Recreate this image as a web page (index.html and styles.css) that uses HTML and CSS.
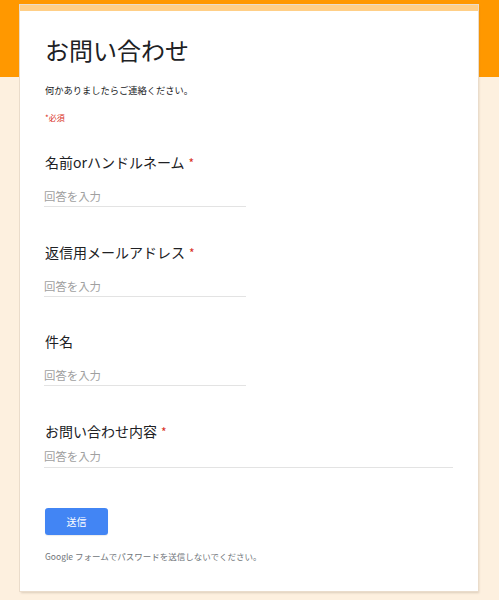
FILE: index.html
```html
<!DOCTYPE html>
<html lang="ja">
<head>
<meta charset="utf-8">
<title>お問い合わせ</title>
<link rel="stylesheet" href="styles.css">
</head>
<body>
<main class="card">
  <h1 class="title">お問い合わせ</h1>
  <p class="desc">何かありましたらご連絡ください。</p>
  <p class="required-note">*必須</p>

  <div class="question">
    <div class="label">名前orハンドルネーム<span class="star">*</span></div>
    <input class="answer" type="text" placeholder="回答を入力">
  </div>

  <div class="question">
    <div class="label">返信用メールアドレス<span class="star">*</span></div>
    <input class="answer" type="text" placeholder="回答を入力">
  </div>

  <div class="question">
    <div class="label">件名</div>
    <input class="answer" type="text" placeholder="回答を入力">
  </div>

  <div class="question question-long">
    <div class="label">お問い合わせ内容<span class="star">*</span></div>
    <input class="answer answer-long" type="text" placeholder="回答を入力">
  </div>

  <button class="submit" type="button">送信</button>
  <p class="footer">Google フォームでパスワードを送信しないでください。</p>
</main>
</body>
</html>
```

FILE: styles.css
```css
html, body {
  margin: 0;
  padding: 0;
}

body {
  background: linear-gradient(#ff9800 0, #ff9800 77px, #fdf0df 77px);
  min-height: 600px;
  font-family: "Noto Sans CJK JP", "Noto Sans", "Liberation Sans", sans-serif;
  color: #202124;
  padding-top: 5px;
}

.card {
  box-sizing: border-box;
  width: 458px;
  margin-left: 20px;
  background: #fff;
  border-top: 6px solid #ffcf87;
  padding: 24px 25px 29px 25px;
  box-shadow: 0 0 0 1px #eadccb, 1px 2px 2px rgba(120, 100, 80, 0.25);
}

.title {
  margin: 0;
  font-size: 24px;
  line-height: 30px;
  font-weight: 400;
  color: #202124;
}

.desc {
  margin: 18px 0 0;
  font-size: 9.25px;
  line-height: 14px;
  color: #202124;
}

.required-note {
  margin: 15px 0 0;
  font-size: 8px;
  line-height: 12px;
  color: #d93025;
}

.question {
  margin-top: 28px;
}

.question + .question {
  margin-top: 34.5px;
}

.label {
  height: 20px;
  font-size: 14px;
  line-height: 20px;
  color: #202124;
}

.star {
  color: #d93025;
  margin-left: 4px;
  font-size: 12px;
  line-height: 1;
}

.answer {
  display: block;
  box-sizing: content-box;
  width: 202px;
  margin: 17px 0 0 -1px;
  padding: 0 0 3px;
  border: 0;
  border-bottom: 1px solid #e3e3e3;
  outline: none;
  background: transparent;
  font-family: inherit;
  font-size: 11.4px;
  line-height: 14px;
  height: 14px;
  color: #202124;
}

.answer::placeholder {
  color: #a0a0a0;
}

.answer-long {
  width: 409px;
  margin-top: 8px;
  padding-bottom: 4.5px;
}

.submit {
  display: block;
  margin-top: 40px;
  width: 63px;
  height: 27px;
  border: 0;
  border-radius: 3px;
  background: #4285f4;
  color: #fff;
  font-family: inherit;
  font-size: 10px;
  padding: 0;
  box-shadow: 0 1px 1px rgba(0, 0, 0, 0.08);
}

.footer {
  margin: 15px 0 0;
  font-size: 8.5px;
  line-height: 12px;
  color: #70757a;
}
```
